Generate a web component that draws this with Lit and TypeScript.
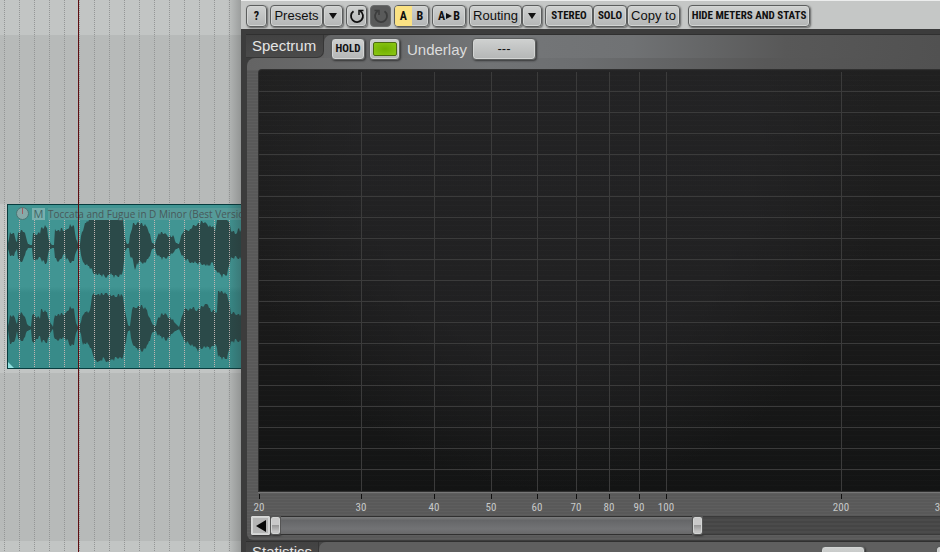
import { LitElement, html, svg, css } from "lit";
import { customElement } from "lit/decorators.js";

type Envelope = [x: number, top: number, bottom: number][];

/* Envelope points: time position, height above centre, depth below centre. */
const LEFT: Envelope = [
  [0, 3, 3], [2, 13, 8], [6, 11, 9], [9, 4, 3], [10, 12, 11], [12, 14, 16], [16, 14, 11], [18, 8, 5], [20, 2, 2],
  [24, 1, 2], [25, 11, 12], [28, 12, 13], [32, 13, 11], [33, 16, 13], [37, 19, 17], [39, 17, 14], [41, 5, 4],
  [44, 1, 2], [46, 1, 2], [47, 17, 13], [50, 15, 14], [54, 16, 11], [57, 14, 7], [58, 15, 12], [62, 21, 15],
  [66, 18, 14], [68, 8, 6], [70, 2, 2], [72, 2, 2], [73, 8, 8], [76, 19, 17], [79, 24, 19], [82, 28, 21],
  [85, 28, 26], [90, 28, 28], [97, 28, 30], [102, 28, 28], [107, 28, 30], [113, 28, 28], [115, 26, 25], [117, 7, 5],
  [119, 2, 2], [121, 3, 2], [122, 10, 8], [125, 21, 13], [127, 21, 25], [129, 24, 17], [133, 21, 15], [137, 20, 16],
  [140, 17, 13], [142, 11, 8], [144, 3, 3], [147, 2, 2], [148, 7, 7], [151, 12, 10], [155, 12, 12], [160, 10, 10],
  [165, 9, 7], [168, 3, 3], [171, 2, 2], [173, 8, 7], [176, 15, 12], [182, 16, 15], [189, 22, 17], [195, 23, 17],
  [200, 21, 20], [205, 18, 16], [207, 14, 22], [209, 28, 25], [214, 28, 30], [219, 28, 27], [221, 25, 19],
  [223, 15, 12], [227, 12, 11], [231, 17, 11], [234, 12, 12],
];
const RIGHT: Envelope = [
  [0, 2, 2], [2, 12, 14], [7, 10, 13], [9, 4, 3], [11, 15, 13], [16, 12, 10], [19, 4, 3], [23, 1, 1], [24, 12, 14],
  [28, 12, 11], [32, 10, 8], [33, 17, 13], [39, 15, 13], [42, 6, 5], [45, 1, 1], [47, 13, 12], [51, 13, 10],
  [57, 13, 10], [59, 16, 12], [62, 21, 16], [66, 17, 16], [68, 5, 5], [70, 1, 1], [73, 6, 6], [75, 13, 15],
  [79, 16, 15], [82, 17, 18], [84, 32, 24], [88, 34, 32], [91, 33, 34], [95, 33, 30], [100, 34, 33], [106, 31, 31],
  [111, 33, 28], [115, 31, 30], [117, 15, 17], [120, 3, 3], [122, 2, 2], [124, 18, 14], [128, 21, 20], [134, 21, 22],
  [139, 17, 18], [142, 9, 11], [145, 3, 4], [148, 2, 3], [149, 8, 6], [154, 13, 9], [158, 13, 11], [163, 9, 7],
  [167, 5, 3], [171, 1, 1], [174, 10, 7], [176, 18, 13], [184, 19, 16], [190, 18, 22], [195, 21, 18], [200, 24, 19],
  [203, 16, 20], [207, 16, 14], [209, 17, 19], [210, 36, 28], [215, 35, 30], [219, 33, 29], [221, 27, 21],
  [223, 14, 14], [228, 14, 12], [234, 12, 12],
];

function wavePath(env: Envelope, centre: number, limit: number): string {
  const top: string[] = [];
  const bottom: string[] = [];
  let i = 0;
  for (let x = 0; x <= 234; x++) {
    while (i < env.length - 2 && env[i + 1][0] <= x) i++;
    const [x0, t0, b0] = env[i];
    const [x1, t1, b1] = env[i + 1];
    const k = (x - x0) / (x1 - x0);
    const t = t0 + (t1 - t0) * k;
    const b = b0 + (b1 - b0) * k;
    const ripple = ((x * 7 + ((x * x) % 5)) % 4) - 1;
    const up = Math.min(t > 6 && t !== 28 ? t + ripple : t, limit);
    const down = b > 6 ? b + (((x * 5 + ((x * x) % 3)) % 4) - 1) : b;
    top.push(`${x},${Math.round(centre - up)}`);
    bottom.unshift(`${x},${Math.round(centre + down)}`);
  }
  return [...top, ...bottom].join(" ");
}

const DECADE = 582;
const freqX = (f: number) => Math.round(DECADE * Math.log10(f / 20));
const FREQS = [20, 30, 40, 50, 60, 70, 80, 90, 100, 200, 300, 400, 500, 600, 700, 800, 900, 1000];
const LEVELS = Array.from({ length: 19 }, (_, i) => 22 + i * 21);

@customElement("track-view")
class TrackView extends LitElement {
  static styles = css`
    :host {
      display: block;
      position: relative;
      overflow: hidden;
      background: #b7bab9;
    }
    .lanes {
      display: grid;
      grid-template-rows: 35px 169px 169px 168px 1fr;
      height: 100%;
    }
    .lane { background: #b7bab9; }
    .lane.light { background: #c2c5c4; }
    .clip {
      display: grid;
      box-sizing: border-box;
      height: 165px;
      margin-left: 7px;
      border: 1px solid #073c3e;
      border-right: 0;
      background: linear-gradient(#419593 0 50%, #388b89 54%);
      overflow: hidden;
    }
    .clip > * { grid-area: 1 / 1; }
    .wave { width: 234px; height: 163px; fill: #2b4a49; }
    .title {
      display: flex;
      align-items: center;
      align-self: start;
      gap: 3px;
      height: 17px;
      padding-left: 8px;
      font: 10px/12px "Open Sans", "Noto Sans", sans-serif;
      color: #48595a;
      white-space: nowrap;
    }
    .knob { width: 13px; height: 13px; }
    .mute {
      width: 13px;
      height: 12px;
      padding: 0;
      border: 0;
      background: #79b0ae;
      color: #426465;
      font: 11px/12px "Open Sans", sans-serif;
    }
    .name { flex: 1; background: #559b99; }
    .grid, .shade, .playhead {
      position: absolute;
      top: 0;
      bottom: 0;
      height: 100%;
    }
    .grid { left: 0; width: 100%; }
    .shade {
      right: 0;
      width: 14px;
      background: linear-gradient(90deg, transparent, rgba(40, 40, 40, 0.25));
    }
    .playhead { left: 78px; width: 1px; background: #5e0d10; }
  `;

  render() {
    return html`
      <div class="lanes">
        <div class="lane light"></div>
        <div class="lane"></div>
        <div class="lane light">
          <div class="clip">
            <svg class="wave" viewBox="0 0 234 163">
              <polygon points=${wavePath(LEFT, 41, 26)} />
              <polygon points=${wavePath(RIGHT, 123, 40)} />
              <path d="M0 157 L6 163 H0Z" fill="#8fe0df" />
            </svg>
            <div class="title">
              <svg class="knob" viewBox="0 0 13 13">
                <circle cx="6.5" cy="6.5" r="6" fill="#86a9a8" stroke="#4d7473" />
                <path d="M6.5 1V7" stroke="#a05a60" />
              </svg>
              <button class="mute">M</button>
              <span class="name">Toccata and Fugue in D Minor (Best Versio</span>
            </div>
          </div>
        </div>
        <div class="lane"></div>
        <div class="lane light"></div>
      </div>
      <svg class="grid">
        <defs>
          <pattern id="beat" width="15" height="2" patternUnits="userSpaceOnUse">
            <rect x="4" width="1" height="1" fill="#949696" />
          </pattern>
          <pattern id="beat-clip" width="15" height="2" patternUnits="userSpaceOnUse">
            <rect x="4" width="1" height="1" fill="#c0b4b2" />
          </pattern>
        </defs>
        <rect width="100%" height="204" fill="url(#beat)" />
        <rect y="369" width="100%" height="100%" fill="url(#beat)" />
        <rect y="204" width="7" height="165" fill="url(#beat)" />
        <rect x="8" y="220" width="100%" height="148" fill="url(#beat-clip)" />
      </svg>
      <div class="shade"></div>
      <div class="playhead"></div>
    `;
  }
}

@customElement("analyzer-view")
class AnalyzerView extends LitElement {
  static styles = css`
    :host {
      display: flex;
      flex-direction: column;
      min-width: 0;
      overflow: hidden;
      background: #3c3c3c;
      font-family: "Liberation Sans", Arial, sans-serif;
    }
    .toolbar {
      display: flex;
      flex: none;
      align-items: center;
      gap: 3px;
      box-sizing: border-box;
      height: 29px;
      padding: 1px 5px 0;
      border-top: 1px solid #eceded;
      background: #c5c7c6;
    }
    .group { display: flex; flex: none; }
    button {
      box-sizing: border-box;
      flex: none;
      display: flex;
      align-items: center;
      justify-content: center;
      height: 22px;
      padding: 0;
      border: 1px solid #5c5e5e;
      border-radius: 4px;
      background: linear-gradient(#cfd1d0, #b4b6b6);
      box-shadow: inset 0 0 0 1px #d3d5d4, 1px 1px 2px rgba(0, 0, 0, 0.5);
      color: #101010;
      font: 13px/20px "Liberation Sans", Arial, sans-serif;
      white-space: nowrap;
    }
    .tight { font: bold 12px/20px "Liberation Sans Narrow", "Roboto Condensed", "Liberation Sans", sans-serif; }
    .small { font-size: 11px; }
    .w20 { width: 20px; }
    .w21 { width: 21px; }
    .w31 { width: 31px; }
    .w34 { width: 34px; }
    .w48 { width: 48px; }
    .w53 { width: 53px; }
    .w64 { width: 64px; }
    .w122 { width: 122px; }
    .start { margin-left: 5px; }
    .off { border-color: #6a6c6c; background: #595a5a; box-shadow: none; color: #3c3d3d; }
    .ab { padding: 0; overflow: hidden; width: 35px; }
    .ab span { flex: 1; height: 20px; }
    .ab .on { background: #fbe283; }
    svg { display: block; }
    .icon { width: 16px; height: 16px; }
    .arrow { width: 8px; height: 8px; fill: #111; }
    .panel { flex: none; margin: 5px 0 0 5px; }
    .head {
      position: relative;
      z-index: 1;
      display: flex;
      background: #464646;
      border-top: 1px solid #303030;
    }
    .tabcell { background: #626262; }
    .tab {
      box-sizing: border-box;
      width: 78px;
      height: 23px;
      margin: 0;
      padding-left: 6px;
      border: 0 solid #363636;
      border-width: 0 1px 1px 0;
      border-bottom-right-radius: 7px;
      background: linear-gradient(#424242, #4a4a4a);
      color: #e4e4e4;
      font: 15px/22px "Liberation Sans", Arial, sans-serif;
    }
    .controls {
      flex: 1;
      display: flex;
      align-items: flex-start;
      gap: 4px;
      height: 23px;
      padding: 3px 7px 0;
      box-sizing: border-box;
      border-top-left-radius: 7px;
      background: linear-gradient(90deg, #636465, #747678 30%, #707274 50%, #585858 75%, #515151);
      color: #dcdcdc;
      font-size: 15px;
    }
    .underlay { display: flex; align-items: center; gap: 5px; margin-left: 3px; }
    .lamp {
      width: 24px;
      height: 14px;
      box-sizing: border-box;
      border: 1px solid #4c6b10;
      border-radius: 2px;
      background: radial-gradient(#6fae00, #8cc814);
    }
    .body {
      box-sizing: border-box;
      padding: 11px 0 5px 11px;
      margin-left: 1px;
      border-top-left-radius: 8px;
      border-bottom-left-radius: 6px;
      background:
        linear-gradient(90deg, #646464, #717375 35%, #6c6e70 48%, #585858 75%, #515151) top / 100% 12px no-repeat,
        repeating-linear-gradient(rgba(255, 255, 255, 0.03) 0 1px, transparent 1px 3px),
        #595959;
    }
    .plot {
      box-sizing: border-box;
      height: 423px;
      border: solid #303030;
      border-width: 1px 0 1px 1px;
      border-radius: 4px 0 0 0;
      box-shadow: 0 1px 0 #777;
      background:
        repeating-linear-gradient(rgba(255, 255, 255, 0.012) 0 1px, transparent 1px 5px),
        radial-gradient(ellipse 48% 80% at 44% 20%, rgba(37, 37, 39, 0.6) 60%, transparent),
        linear-gradient(#202020, #1a1a1a 60%, #131414);
    }
    .chart { width: 100%; height: 421px; }
    .chart line { stroke: #3b3b3b; shape-rendering: crispEdges; }
    .axis { width: 100%; height: 25px; overflow: visible; }
    .axis line { stroke: #111; shape-rendering: crispEdges; }
    .axis text { fill: #c6c8c8; text-anchor: middle; font: 11px "Liberation Sans Narrow", "Roboto Condensed", "Liberation Sans", sans-serif; }
    .scroll {
      display: flex;
      height: 19px;
      margin-left: -7px;
      margin-top: -1px;
      box-sizing: border-box;
    }
    .scroll button { height: 19px; }
    .step { width: 19px; border-color: #d8d8d8; border-radius: 1px; background: #b5b5b5; }
    .handle {
      width: 11px;
      border-color: #555;
      border-radius: 3px;
      background: linear-gradient(#c9c9c9 45%, #999 50%, #c4c4c4 85%);
    }
    .fill, .rest { box-sizing: border-box; border: solid #303030; border-width: 1px 0; }
    .fill { flex: 411; background: linear-gradient(#7b7c7d, #656668 20%, #727375 70%, #686869); }
    .rest { flex: 237; border-color: #3a3a3a; background: repeating-linear-gradient(#454545 0 2px, #4b4b4b 2px 4px); }
    .stats { margin-top: 1px; }
    .stats .tab { width: 73px; line-height: 20px; }
    .stats .controls { justify-content: flex-end; padding: 4px 0 0 8px; gap: 71px; background: #5f5f5f; }
    .stats .controls button { width: 44px; }
    .stats .controls button:last-child { width: 4px; border-right: 0; border-radius: 4px 0 0 0; }
  `;

  private down() {
    return html`<svg class="arrow" viewBox="0 0 8 8"><path d="M0 1H8L4 7Z" /></svg>`;
  }

  private rotate(flip: boolean) {
    return html`<svg class="icon" viewBox="0 0 16 16" fill="none" stroke="currentColor" stroke-width="1.8">
      <g transform=${flip ? "translate(16 0) scale(-1 1)" : ""}>
        <path d="M4.5 3.2A6 6 0 1 0 11.2 3" />
        <path d="M10 7V2.6H14.5" stroke-width="1.5" />
      </g>
    </svg>`;
  }

  render() {
    return html`
      <div class="toolbar">
        <button class="tight w21">?</button>
        <div class="group">
          <button class="w53">Presets</button>
          <button class="w20" aria-label="Choose preset">${this.down()}</button>
        </div>
        <button class="w21" aria-label="Undo">${this.rotate(false)}</button>
        <button class="w21 off" aria-label="Redo">${this.rotate(true)}</button>
        <button class="tight ab"><span class="on">A</span><span>B</span></button>
        <button class="tight w34">A<svg class="arrow" viewBox="0 0 8 8"><path d="M1 1L7 4L1 7Z" /></svg>B</button>
        <div class="group">
          <button class="w53">Routing</button>
          <button class="w20" aria-label="Choose routing">${this.down()}</button>
        </div>
        <div class="group">
          <button class="tight small w48">STEREO</button>
          <button class="tight small w34">SOLO</button>
          <button class="w53">Copy to</button>
        </div>
        <button class="tight small w122 start">HIDE METERS AND STATS</button>
      </div>

      <section class="panel">
        <div class="head">
          <div class="tabcell"><h2 class="tab">Spectrum</h2></div>
          <div class="controls">
            <button class="tight small w34">HOLD</button>
            <button class="w31" aria-label="Spectrum on"><span class="lamp"></span></button>
            <label class="underlay">Underlay <button class="w64">---</button></label>
          </div>
        </div>
        <div class="body">
          <div class="plot">
            <svg class="chart">
              ${LEVELS.map((y) => svg`<line x1="0" x2="100%" y1=${y - 0.5} y2=${y - 0.5} />`)}
              ${FREQS.slice(1).map((f) => svg`<line x1=${freqX(f) + 0.5} x2=${freqX(f) + 0.5} y1="2" y2="421" />`)}
            </svg>
          </div>
          <svg class="axis">
            ${FREQS.filter((f) => f <= 300).map(
              (f) => svg`
                <line x1=${freqX(f) + 1.5} x2=${freqX(f) + 1.5} y1="2" y2="7" />
                <text x=${freqX(f) + 1} y="19">${f}</text>
              `
            )}
          </svg>
          <div class="scroll">
            <button class="step" aria-label="Scroll left">
              <svg width="12" height="12" viewBox="0 0 12 12"><path d="M11 0V12L1 6Z" fill="#080808" /></svg>
            </button>
            <button class="handle" aria-label="Range start"></button>
            <div class="fill"></div>
            <button class="handle" aria-label="Range end"></button>
            <div class="rest"></div>
          </div>
        </div>
      </section>

      <section class="panel stats">
        <div class="head">
          <div class="tabcell"><h2 class="tab">Statistics</h2></div>
          <div class="controls">
            <button aria-label="Statistics options"></button>
            <button aria-label="More statistics"></button>
          </div>
        </div>
      </section>
    `;
  }
}

@customElement("app-root")
class AppRoot extends LitElement {
  static styles = css`
    :host {
      display: grid;
      grid-template-columns: 241px minmax(0, 1fr);
      height: 100vh;
      overflow: hidden;
    }
  `;

  render() {
    return html`<track-view></track-view><analyzer-view></analyzer-view>`;
  }
}
